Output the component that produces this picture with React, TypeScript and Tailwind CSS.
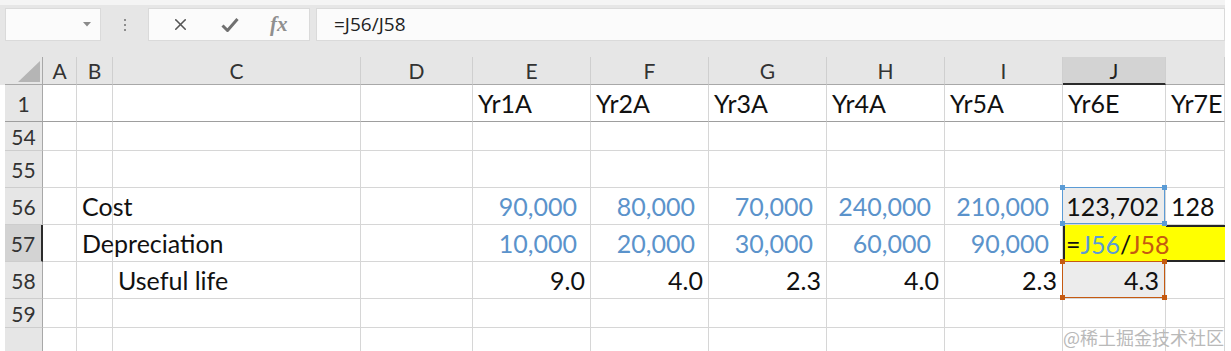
import { X } from 'lucide-react';

// Spreadsheet view: formula bar + a grid slice (rows 1, 54–59, columns A–K)
// with J57 in edit mode and the J56 / J58 reference boxes drawn over it.

type Col = { id: string; w: string };

const COLS: Col[] = [
  { id: 'A', w: 'w-[34px]' },
  { id: 'B', w: 'w-[36px]' },
  { id: 'C', w: 'w-[248px]' },
  { id: 'D', w: 'w-[112px]' },
  { id: 'E', w: 'w-[118px]' },
  { id: 'F', w: 'w-[118px]' },
  { id: 'G', w: 'w-[118px]' },
  { id: 'H', w: 'w-[118px]' },
  { id: 'I', w: 'w-[118px]' },
  { id: 'J', w: 'w-[103px]' },
  { id: 'K', w: 'w-[59px]' },
];

type Cell = { text: string; right?: boolean; blue?: boolean; wide?: boolean };

type Row = { n: string; h: string; freeze?: boolean; cells: Record<string, Cell> };

const ROWS: Row[] = [
  {
    n: '1', h: 'h-[37px]', freeze: true,
    cells: {
      E: { text: 'Yr1A' }, F: { text: 'Yr2A' }, G: { text: 'Yr3A' }, H: { text: 'Yr4A' },
      I: { text: 'Yr5A' }, J: { text: 'Yr6E' }, K: { text: 'Yr7E' },
    },
  },
  { n: '54', h: 'h-[29px]', cells: {} },
  { n: '55', h: 'h-[37px]', cells: {} },
  {
    n: '56', h: 'h-[37px]',
    cells: {
      B: { text: 'Cost' },
      E: { text: '90,000', right: true, blue: true, wide: true },
      F: { text: '80,000', right: true, blue: true, wide: true },
      G: { text: '70,000', right: true, blue: true, wide: true },
      H: { text: '240,000', right: true, blue: true, wide: true },
      I: { text: '210,000', right: true, blue: true, wide: true },
      K: { text: '128' },
    },
  },
  {
    n: '57', h: 'h-[37px]',
    cells: {
      B: { text: 'Depreciation' },
      E: { text: '10,000', right: true, blue: true, wide: true },
      F: { text: '20,000', right: true, blue: true, wide: true },
      G: { text: '30,000', right: true, blue: true, wide: true },
      H: { text: '60,000', right: true, blue: true, wide: true },
      I: { text: '90,000', right: true, blue: true, wide: true },
    },
  },
  {
    n: '58', h: 'h-[37px]',
    cells: {
      C: { text: 'Useful life' },
      E: { text: '9.0', right: true }, F: { text: '4.0', right: true },
      G: { text: '2.3', right: true }, H: { text: '4.0', right: true },
      I: { text: '2.3', right: true },
    },
  },
  { n: '59', h: 'h-[29px]', cells: {} },
  { n: '', h: 'h-[30px]', cells: {} },
];

function Corner({ pos, color }: { pos: string; color: string }) {
  return <span className={`absolute z-10 h-[5px] w-[5px] ${pos} ${color}`} />;
}

function RefBox({ color, square }: { color: string; square: string }) {
  return (
    <div className={`pointer-events-none absolute -left-px -top-px bottom-0 right-0 z-30 border ${color}`}>
      <Corner pos="-left-[3px] -top-[3px]" color={square} />
      <Corner pos="-right-[3px] -top-[3px]" color={square} />
      <Corner pos="-left-[3px] -bottom-[3px]" color={square} />
      <Corner pos="-right-[3px] -bottom-[3px]" color={square} />
    </div>
  );
}

function DataCell({ col, row, cell }: { col: Col; row: Row; cell?: Cell }) {
  const key = `${col.id}${row.n}`;
  const base = `${col.w} relative h-full shrink-0 flex items-end pb-[5px] leading-none`;
  const bottom = row.freeze ? 'border-b border-b-[#9e9e9e]' : 'border-b border-b-[#d6d6d6]';

  if (key === 'J56' || key === 'J58') {
    const ref =
      key === 'J56'
        ? <RefBox color="border-[#5b9bd5]" square="bg-[#5b9bd5]" />
        : <RefBox color="border-[#c55a11]" square="bg-[#c55a11]" />;
    return (
      <div className={`${base} justify-end pr-[6px] bg-[#ececec] border-r border-r-[#d6d6d6] ${bottom} text-[#111111]`}>
        {ref}
        <span className="relative">{key === 'J56' ? '123,702' : '4.3'}</span>
      </div>
    );
  }

  if (key === 'J57') {
    return (
      <div className={`${base} z-20 bg-[#ffff00] border-l-2 border-l-[#262626] pl-[1px] text-[#111111]`}>
        <span className="whitespace-nowrap">
          =<span className="text-[#5b9bd5]">J56</span>/<span className="text-[#c55a11]">J58</span>
        </span>
      </div>
    );
  }

  if (key === 'K57') {
    return <div className={`${col.w} h-full shrink-0 bg-[#ffff00] border-t-2 border-b-2 border-[#262626]`} />;
  }

  const align = cell?.right ? `justify-end ${cell.wide ? 'pr-[13px]' : 'pr-[5px]'}` : 'pl-[5px]';
  return (
    <div className={`${base} ${align} border-r border-r-[#d6d6d6] ${bottom} ${cell?.blue ? 'text-[#5b93cb]' : 'text-[#111111]'}`}>
      {cell && <span className="whitespace-nowrap">{cell.text}</span>}
    </div>
  );
}

function FormulaBar() {
  return (
    <div className="flex h-[36px] items-start bg-[#e6e6e6] pl-[5px] pt-[3px]">
      {/* Name box */}
      <div className="flex h-[33px] w-[96px] items-center justify-end border border-[#dadada] bg-[#fbfbfb] pr-[9px]">
        <svg width="8" height="5" viewBox="0 0 8 5"><path d="M0 0h8L4 4.5z" fill="#8a8a8a" /></svg>
      </div>
      {/* grip */}
      <div className="flex h-[33px] w-[47px] flex-col items-center justify-center gap-[3px]">
        <span className="h-[2px] w-[2px] bg-[#8d8d8d]" />
        <span className="h-[2px] w-[2px] bg-[#8d8d8d]" />
        <span className="h-[2px] w-[2px] bg-[#8d8d8d]" />
      </div>
      {/* cancel / enter / fx */}
      <div className="flex h-[33px] w-[162px] items-center justify-around border border-[#dadada] bg-[#fbfbfb] px-[6px]">
        <X className="h-[19px] w-[19px] text-[#555555]" strokeWidth={2} />
        <svg width="18" height="16" viewBox="0 0 18 16">
          <path d="M1.5 8.5 L6.5 13.5 L16.5 2" fill="none" stroke="#707070" strokeWidth="3" strokeLinejoin="round" />
        </svg>
        <span className="[font-family:'Liberation_Serif',serif] text-[21px] font-bold italic leading-none text-[#8f8f8f]">fx</span>
      </div>
      <div className="ml-[6px] flex h-[33px] w-[909px] items-center border border-[#dadada] bg-[#fbfbfb] pl-[17px] [font-family:'Open_Sans',sans-serif] text-[19px] text-[#222222]">
        =J56/J58
      </div>
    </div>
  );
}

function HeaderRow() {
  return (
    <div className="flex h-[28px] bg-[#e6e6e6] pl-[5px] [font-family:Lato,sans-serif] text-[21px] text-[#333333]">
      <div className="relative h-full w-[38px] shrink-0 border-b border-r border-[#a8a8a8]">
        <svg className="absolute bottom-[2px] right-[2px]" width="22" height="21" viewBox="0 0 22 21">
          <path d="M22 0 V21 H0 Z" fill="#b5b5b5" />
        </svg>
      </div>
      {COLS.map((c) => {
        const sel = c.id === 'J';
        return (
          <div
            key={c.id}
            className={`${c.w} flex h-full shrink-0 items-center justify-center border-r border-r-[#cfcfcf] leading-none ${
              sel ? 'border-b-2 border-b-[#2b2b2b] bg-[#d3d3d3] text-[#222]' : 'border-b border-b-[#a8a8a8]'
            }`}
          >
            {c.id === 'K' ? '' : c.id}
          </div>
        );
      })}
    </div>
  );
}

export default function App() {
  return (
    <div className="relative h-[351px] w-[1231px] overflow-hidden bg-white">
      <div className="w-[1225px]">
        <div className="h-[5px] bg-[#f4f4f4]" />
        <FormulaBar />
        <div className="h-[16px] bg-[#e6e6e6]" />
        <HeaderRow />
        <div className="pl-[5px] [font-family:Lato,sans-serif] text-[25px]">
          {ROWS.map((r) => {
            const sel = r.n === '57';
            return (
              <div key={r.n || 'tail'} className={`flex ${r.h}`}>
                <div
                  className={`flex h-full w-[38px] shrink-0 items-center justify-center text-[21px] leading-none text-[#333333] ${
                    r.freeze ? 'border-b border-b-[#9e9e9e]' : 'border-b border-b-[#cdcdcd]'
                  } ${sel ? 'border-r-2 border-r-[#2b2b2b] bg-[#d3d3d3]' : 'border-r border-r-[#a8a8a8] bg-[#e6e6e6]'}`}
                >
                  {r.n}
                </div>
                {COLS.map((c) => (
                  <DataCell key={c.id} col={c} row={r} cell={r.cells[c.id]} />
                ))}
              </div>
            );
          })}
        </div>
      </div>
      <div className="pointer-events-none absolute bottom-[5px] right-[7px] [font-family:'Noto_Sans_CJK_SC',sans-serif] text-[18px] leading-none text-[#b9b9b9]">
        @稀土掘金技术社区
      </div>
    </div>
  );
}
